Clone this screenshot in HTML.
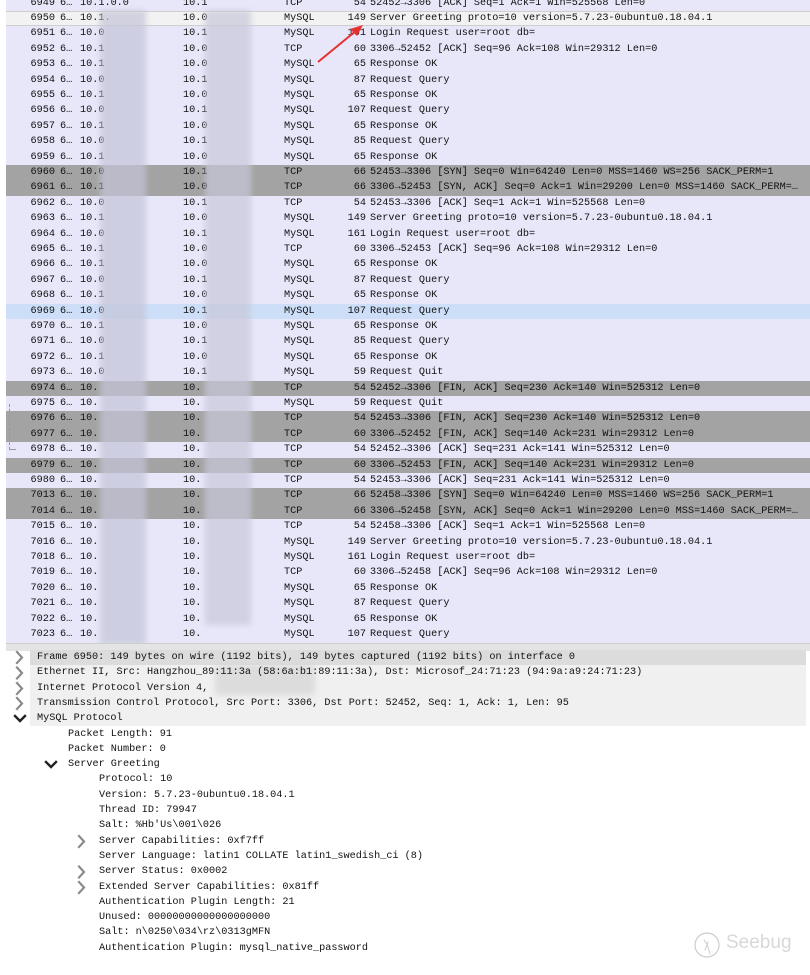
<!DOCTYPE html>
<html><head><meta charset="utf-8"><style>
body{margin:0;width:810px;height:975px;background:#fff;overflow:hidden;position:relative;font-family:"Liberation Mono",monospace;font-size:10.2px;color:#111}
#list{position:absolute;left:6px;top:0;width:804px;height:643px;background:#e8e7fa;overflow:hidden}
.r{position:absolute;left:0;width:804px;height:15.4px;line-height:15.4px;white-space:pre}
.r span{position:absolute;top:0}
.g{background:#a3a3a3}
.s{background:#f2f2f2;border-top:1px solid #cfcfcf;border-bottom:1px solid #cfcfcf;box-sizing:border-box;line-height:13.4px}
.b{background:#cddff8}
.n{right:755px;text-align:right}
.t{left:54px}.sr{left:74px}.d{left:177px}.p{left:278px}
.l{right:444px;text-align:right}.i{left:364px}
.blur{position:absolute;filter:blur(3px);opacity:.7}
#sep{position:absolute;left:6px;top:643px;width:804px;height:7px;background:#e4e4e4;border-top:1px solid #ccc}
.dr{position:absolute;left:6px;width:800px;height:15.3px;line-height:15.3px;white-space:pre}
.hl{background:#f0f0f0}
.sel{background:#dcdcdc}
svg.c{position:absolute}
</style></head><body>
<div id="list">
<div class="r" style="top:-4.4px"><span class="n">6949</span><span class="t">6…</span><span class="sr">10.1.0.0</span><span class="d">10.1</span><span class="p">TCP</span><span class="l">54</span><span class="i">52452→3306 [ACK] Seq=1 Ack=1 Win=525568 Len=0</span></div>
<div class="r s" style="top:11px"><span class="n">6950</span><span class="t">6…</span><span class="sr">10.1.</span><span class="d">10.0</span><span class="p">MySQL</span><span class="l">149</span><span class="i">Server Greeting proto=10 version=5.7.23-0ubuntu0.18.04.1</span></div>
<div class="r" style="top:26.4px"><span class="n">6951</span><span class="t">6…</span><span class="sr">10.0</span><span class="d">10.1</span><span class="p">MySQL</span><span class="l">161</span><span class="i">Login Request user=root db=</span></div>
<div class="r" style="top:41.8px"><span class="n">6952</span><span class="t">6…</span><span class="sr">10.1</span><span class="d">10.0</span><span class="p">TCP</span><span class="l">60</span><span class="i">3306→52452 [ACK] Seq=96 Ack=108 Win=29312 Len=0</span></div>
<div class="r" style="top:57.2px"><span class="n">6953</span><span class="t">6…</span><span class="sr">10.1</span><span class="d">10.0</span><span class="p">MySQL</span><span class="l">65</span><span class="i">Response OK</span></div>
<div class="r" style="top:72.6px"><span class="n">6954</span><span class="t">6…</span><span class="sr">10.0</span><span class="d">10.1</span><span class="p">MySQL</span><span class="l">87</span><span class="i">Request Query</span></div>
<div class="r" style="top:88px"><span class="n">6955</span><span class="t">6…</span><span class="sr">10.1</span><span class="d">10.0</span><span class="p">MySQL</span><span class="l">65</span><span class="i">Response OK</span></div>
<div class="r" style="top:103.4px"><span class="n">6956</span><span class="t">6…</span><span class="sr">10.0</span><span class="d">10.1</span><span class="p">MySQL</span><span class="l">107</span><span class="i">Request Query</span></div>
<div class="r" style="top:118.8px"><span class="n">6957</span><span class="t">6…</span><span class="sr">10.1</span><span class="d">10.0</span><span class="p">MySQL</span><span class="l">65</span><span class="i">Response OK</span></div>
<div class="r" style="top:134.2px"><span class="n">6958</span><span class="t">6…</span><span class="sr">10.0</span><span class="d">10.1</span><span class="p">MySQL</span><span class="l">85</span><span class="i">Request Query</span></div>
<div class="r" style="top:149.6px"><span class="n">6959</span><span class="t">6…</span><span class="sr">10.1</span><span class="d">10.0</span><span class="p">MySQL</span><span class="l">65</span><span class="i">Response OK</span></div>
<div class="r g" style="top:165px"><span class="n">6960</span><span class="t">6…</span><span class="sr">10.0</span><span class="d">10.1</span><span class="p">TCP</span><span class="l">66</span><span class="i">52453→3306 [SYN] Seq=0 Win=64240 Len=0 MSS=1460 WS=256 SACK_PERM=1</span></div>
<div class="r g" style="top:180.4px"><span class="n">6961</span><span class="t">6…</span><span class="sr">10.1</span><span class="d">10.0</span><span class="p">TCP</span><span class="l">66</span><span class="i">3306→52453 [SYN, ACK] Seq=0 Ack=1 Win=29200 Len=0 MSS=1460 SACK_PERM=…</span></div>
<div class="r" style="top:195.8px"><span class="n">6962</span><span class="t">6…</span><span class="sr">10.0</span><span class="d">10.1</span><span class="p">TCP</span><span class="l">54</span><span class="i">52453→3306 [ACK] Seq=1 Ack=1 Win=525568 Len=0</span></div>
<div class="r" style="top:211.2px"><span class="n">6963</span><span class="t">6…</span><span class="sr">10.1</span><span class="d">10.0</span><span class="p">MySQL</span><span class="l">149</span><span class="i">Server Greeting proto=10 version=5.7.23-0ubuntu0.18.04.1</span></div>
<div class="r" style="top:226.6px"><span class="n">6964</span><span class="t">6…</span><span class="sr">10.0</span><span class="d">10.1</span><span class="p">MySQL</span><span class="l">161</span><span class="i">Login Request user=root db=</span></div>
<div class="r" style="top:242px"><span class="n">6965</span><span class="t">6…</span><span class="sr">10.1</span><span class="d">10.0</span><span class="p">TCP</span><span class="l">60</span><span class="i">3306→52453 [ACK] Seq=96 Ack=108 Win=29312 Len=0</span></div>
<div class="r" style="top:257.4px"><span class="n">6966</span><span class="t">6…</span><span class="sr">10.1</span><span class="d">10.0</span><span class="p">MySQL</span><span class="l">65</span><span class="i">Response OK</span></div>
<div class="r" style="top:272.8px"><span class="n">6967</span><span class="t">6…</span><span class="sr">10.0</span><span class="d">10.1</span><span class="p">MySQL</span><span class="l">87</span><span class="i">Request Query</span></div>
<div class="r" style="top:288.2px"><span class="n">6968</span><span class="t">6…</span><span class="sr">10.1</span><span class="d">10.0</span><span class="p">MySQL</span><span class="l">65</span><span class="i">Response OK</span></div>
<div class="r b" style="top:303.6px"><span class="n">6969</span><span class="t">6…</span><span class="sr">10.0</span><span class="d">10.1</span><span class="p">MySQL</span><span class="l">107</span><span class="i">Request Query</span></div>
<div class="r" style="top:319px"><span class="n">6970</span><span class="t">6…</span><span class="sr">10.1</span><span class="d">10.0</span><span class="p">MySQL</span><span class="l">65</span><span class="i">Response OK</span></div>
<div class="r" style="top:334.4px"><span class="n">6971</span><span class="t">6…</span><span class="sr">10.0</span><span class="d">10.1</span><span class="p">MySQL</span><span class="l">85</span><span class="i">Request Query</span></div>
<div class="r" style="top:349.8px"><span class="n">6972</span><span class="t">6…</span><span class="sr">10.1</span><span class="d">10.0</span><span class="p">MySQL</span><span class="l">65</span><span class="i">Response OK</span></div>
<div class="r" style="top:365.2px"><span class="n">6973</span><span class="t">6…</span><span class="sr">10.0</span><span class="d">10.1</span><span class="p">MySQL</span><span class="l">59</span><span class="i">Request Quit</span></div>
<div class="r g" style="top:380.6px"><span class="n">6974</span><span class="t">6…</span><span class="sr">10.</span><span class="d">10.</span><span class="p">TCP</span><span class="l">54</span><span class="i">52452→3306 [FIN, ACK] Seq=230 Ack=140 Win=525312 Len=0</span></div>
<div class="r" style="top:396px"><span class="n">6975</span><span class="t">6…</span><span class="sr">10.</span><span class="d">10.</span><span class="p">MySQL</span><span class="l">59</span><span class="i">Request Quit</span></div>
<div class="r g" style="top:411.4px"><span class="n">6976</span><span class="t">6…</span><span class="sr">10.</span><span class="d">10.</span><span class="p">TCP</span><span class="l">54</span><span class="i">52453→3306 [FIN, ACK] Seq=230 Ack=140 Win=525312 Len=0</span></div>
<div class="r g" style="top:426.8px"><span class="n">6977</span><span class="t">6…</span><span class="sr">10.</span><span class="d">10.</span><span class="p">TCP</span><span class="l">60</span><span class="i">3306→52452 [FIN, ACK] Seq=140 Ack=231 Win=29312 Len=0</span></div>
<div class="r" style="top:442.2px"><span class="n">6978</span><span class="t">6…</span><span class="sr">10.</span><span class="d">10.</span><span class="p">TCP</span><span class="l">54</span><span class="i">52452→3306 [ACK] Seq=231 Ack=141 Win=525312 Len=0</span></div>
<div class="r g" style="top:457.6px"><span class="n">6979</span><span class="t">6…</span><span class="sr">10.</span><span class="d">10.</span><span class="p">TCP</span><span class="l">60</span><span class="i">3306→52453 [FIN, ACK] Seq=140 Ack=231 Win=29312 Len=0</span></div>
<div class="r" style="top:473px"><span class="n">6980</span><span class="t">6…</span><span class="sr">10.</span><span class="d">10.</span><span class="p">TCP</span><span class="l">54</span><span class="i">52453→3306 [ACK] Seq=231 Ack=141 Win=525312 Len=0</span></div>
<div class="r g" style="top:488.4px"><span class="n">7013</span><span class="t">6…</span><span class="sr">10.</span><span class="d">10.</span><span class="p">TCP</span><span class="l">66</span><span class="i">52458→3306 [SYN] Seq=0 Win=64240 Len=0 MSS=1460 WS=256 SACK_PERM=1</span></div>
<div class="r g" style="top:503.8px"><span class="n">7014</span><span class="t">6…</span><span class="sr">10.</span><span class="d">10.</span><span class="p">TCP</span><span class="l">66</span><span class="i">3306→52458 [SYN, ACK] Seq=0 Ack=1 Win=29200 Len=0 MSS=1460 SACK_PERM=…</span></div>
<div class="r" style="top:519.2px"><span class="n">7015</span><span class="t">6…</span><span class="sr">10.</span><span class="d">10.</span><span class="p">TCP</span><span class="l">54</span><span class="i">52458→3306 [ACK] Seq=1 Ack=1 Win=525568 Len=0</span></div>
<div class="r" style="top:534.6px"><span class="n">7016</span><span class="t">6…</span><span class="sr">10.</span><span class="d">10.</span><span class="p">MySQL</span><span class="l">149</span><span class="i">Server Greeting proto=10 version=5.7.23-0ubuntu0.18.04.1</span></div>
<div class="r" style="top:550px"><span class="n">7018</span><span class="t">6…</span><span class="sr">10.</span><span class="d">10.</span><span class="p">MySQL</span><span class="l">161</span><span class="i">Login Request user=root db=</span></div>
<div class="r" style="top:565.4px"><span class="n">7019</span><span class="t">6…</span><span class="sr">10.</span><span class="d">10.</span><span class="p">TCP</span><span class="l">60</span><span class="i">3306→52458 [ACK] Seq=96 Ack=108 Win=29312 Len=0</span></div>
<div class="r" style="top:580.8px"><span class="n">7020</span><span class="t">6…</span><span class="sr">10.</span><span class="d">10.</span><span class="p">MySQL</span><span class="l">65</span><span class="i">Response OK</span></div>
<div class="r" style="top:596.2px"><span class="n">7021</span><span class="t">6…</span><span class="sr">10.</span><span class="d">10.</span><span class="p">MySQL</span><span class="l">87</span><span class="i">Request Query</span></div>
<div class="r" style="top:611.6px"><span class="n">7022</span><span class="t">6…</span><span class="sr">10.</span><span class="d">10.</span><span class="p">MySQL</span><span class="l">65</span><span class="i">Response OK</span></div>
<div class="r" style="top:627px"><span class="n">7023</span><span class="t">6…</span><span class="sr">10.</span><span class="d">10.</span><span class="p">MySQL</span><span class="l">107</span><span class="i">Request Query</span></div>
<div style="position:absolute;left:3px;top:404px;height:46px;border-left:1px dashed #999"></div>
<div style="position:absolute;left:3px;top:449px;width:7px;border-top:1px solid #999"></div>
</div>
<div class="blur" style="left:100px;top:10px;width:46px;height:635px;background:#c4c4d8"></div>
<div class="blur" style="left:205px;top:10px;width:46px;height:615px;background:#c8c8da"></div>
<svg style="position:absolute;left:0;top:0" width="810" height="975"><line x1="318" y1="62" x2="357" y2="30" stroke="#e83030" stroke-width="2"/><polygon points="363,25 350,29 357,36" fill="#e83030"/></svg>
<div id="sep"></div>
<div class="dr sel" style="top:650px;left:30px;width:776px"></div>
<div class="dr hl" style="top:665.3px;left:30px;width:776px"></div>
<div class="dr hl" style="top:680.6px;left:30px;width:776px"></div>
<div class="dr hl" style="top:695.9px;left:30px;width:776px"></div>
<div class="dr hl" style="top:711.2px;left:30px;width:776px"></div>
<div class="blur" style="left:215px;top:665px;width:100px;height:30px;background:#d4d4d4"></div>
<div class="dr" style="top:650px"><span style="position:absolute;left:31px">Frame 6950: 149 bytes on wire (1192 bits), 149 bytes captured (1192 bits) on interface 0</span></div>
<div class="dr" style="top:665.3px"><span style="position:absolute;left:31px">Ethernet II, Src: Hangzhou_89:11:3a (58:6a:b1:89:11:3a), Dst: Microsof_24:71:23 (94:9a:a9:24:71:23)</span></div>
<div class="dr" style="top:680.6px"><span style="position:absolute;left:31px">Internet Protocol Version 4,</span></div>
<div class="dr" style="top:695.9px"><span style="position:absolute;left:31px">Transmission Control Protocol, Src Port: 3306, Dst Port: 52452, Seq: 1, Ack: 1, Len: 95</span></div>
<div class="dr" style="top:711.2px"><span style="position:absolute;left:31px">MySQL Protocol</span></div>
<div class="dr" style="top:726.5px;left:68px">Packet Length: 91</div>
<div class="dr" style="top:741.8px;left:68px">Packet Number: 0</div>
<div class="dr" style="top:757.1px"><span style="position:absolute;left:62px">Server Greeting</span></div>
<div class="dr" style="top:772.4px;left:99px">Protocol: 10</div>
<div class="dr" style="top:787.7px;left:99px">Version: 5.7.23-0ubuntu0.18.04.1</div>
<div class="dr" style="top:803px;left:99px">Thread ID: 79947</div>
<div class="dr" style="top:818.3px;left:99px">Salt: %Hb'Us\001\026</div>
<div class="dr" style="top:833.6px;left:99px">Server Capabilities: 0xf7ff</div>
<div class="dr" style="top:848.9px;left:99px">Server Language: latin1 COLLATE latin1_swedish_ci (8)</div>
<div class="dr" style="top:864.2px;left:99px">Server Status: 0x0002</div>
<div class="dr" style="top:879.5px;left:99px">Extended Server Capabilities: 0x81ff</div>
<div class="dr" style="top:894.8px;left:99px">Authentication Plugin Length: 21</div>
<div class="dr" style="top:910.1px;left:99px">Unused: 00000000000000000000</div>
<div class="dr" style="top:925.4px;left:99px">Salt: n\0250\034\rz\0313gMFN</div>
<div class="dr" style="top:940.7px;left:99px">Authentication Plugin: mysql_native_password</div>
<svg style="position:absolute;left:0;top:0" width="810" height="975" fill="none" stroke-linecap="square">
<g stroke="#8a8a8a" stroke-width="2.2">
<path d="M17 652 L22 657.5 L17 663"/>
<path d="M17 667.5 L22 673 L17 678.5"/>
<path d="M17 683 L22 688.5 L17 694"/>
<path d="M17 698 L22 703.5 L17 709"/>
<path d="M79 836 L84 841.5 L79 847"/>
<path d="M79 866.5 L84 872 L79 877.5"/>
<path d="M79 882 L84 887.5 L79 893"/>
</g>
<g stroke="#222" stroke-width="2.4">
<path d="M15 716 L20 721 L25 716"/>
<path d="M46 762 L51 767 L56 762"/>
</g>
<circle cx="707" cy="945" r="12" stroke="#ccc" stroke-width="1.2"/><path d="M704 940 L707 944 L710 954 M705 950 L708 942" stroke="#ccc"/>
</svg>
<div style="position:absolute;left:726px;top:932px;font-family:'Liberation Sans',sans-serif;font-size:19px;color:#d8d8d8">Seebug</div>
</body></html>
